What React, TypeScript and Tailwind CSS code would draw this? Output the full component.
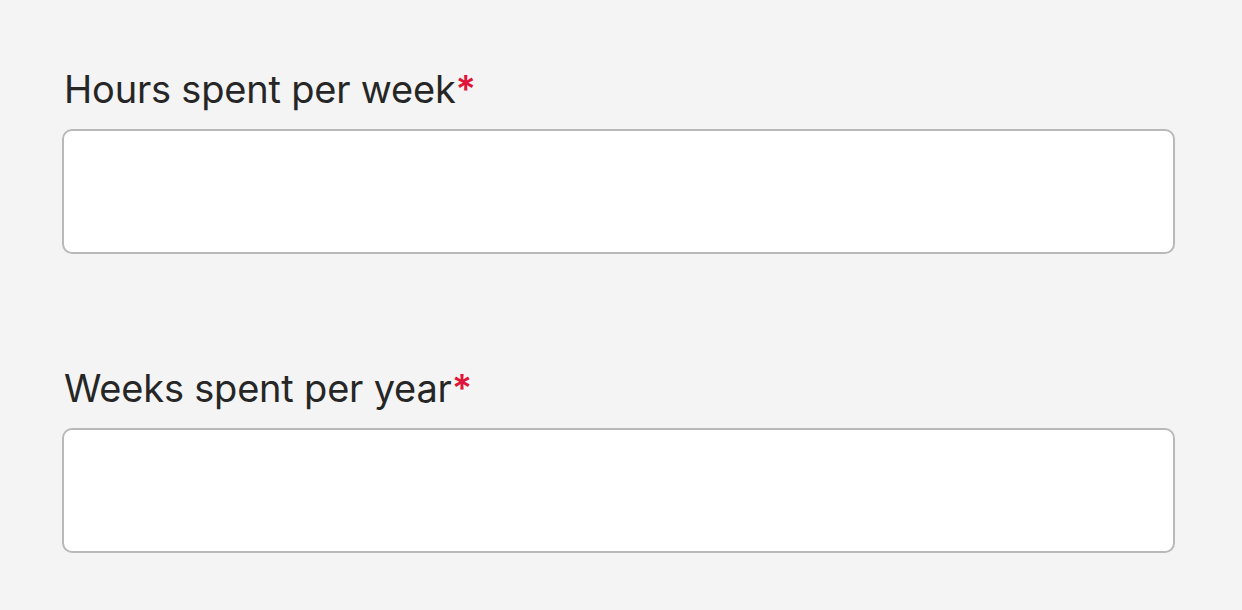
import React from 'react';

const Field: React.FC<{ label: string }> = ({ label }) => (
  <div className="flex flex-col">
    <label className="text-[38px] leading-[48px] text-[#262626] tracking-[-0.2px] pl-[2px]">
      {label}
      <span className="text-[#e0153a] font-semibold">*</span>
    </label>
    <input
      type="text"
      className="mt-[16px] h-[125px] w-[1113px] rounded-[10px] border-2 border-[#b9b9b9] bg-white outline-none"
    />
  </div>
);

export default function App() {
  return (
    <div
      className="min-h-[610px] w-full bg-[#f4f4f4] pl-[62px] pt-[65px] flex flex-col gap-[110px]"
      style={{ fontFamily: 'Inter, "Noto Sans", sans-serif' }}
    >
      <Field label="Hours spent per week" />
      <Field label="Weeks spent per year" />
    </div>
  );
}
